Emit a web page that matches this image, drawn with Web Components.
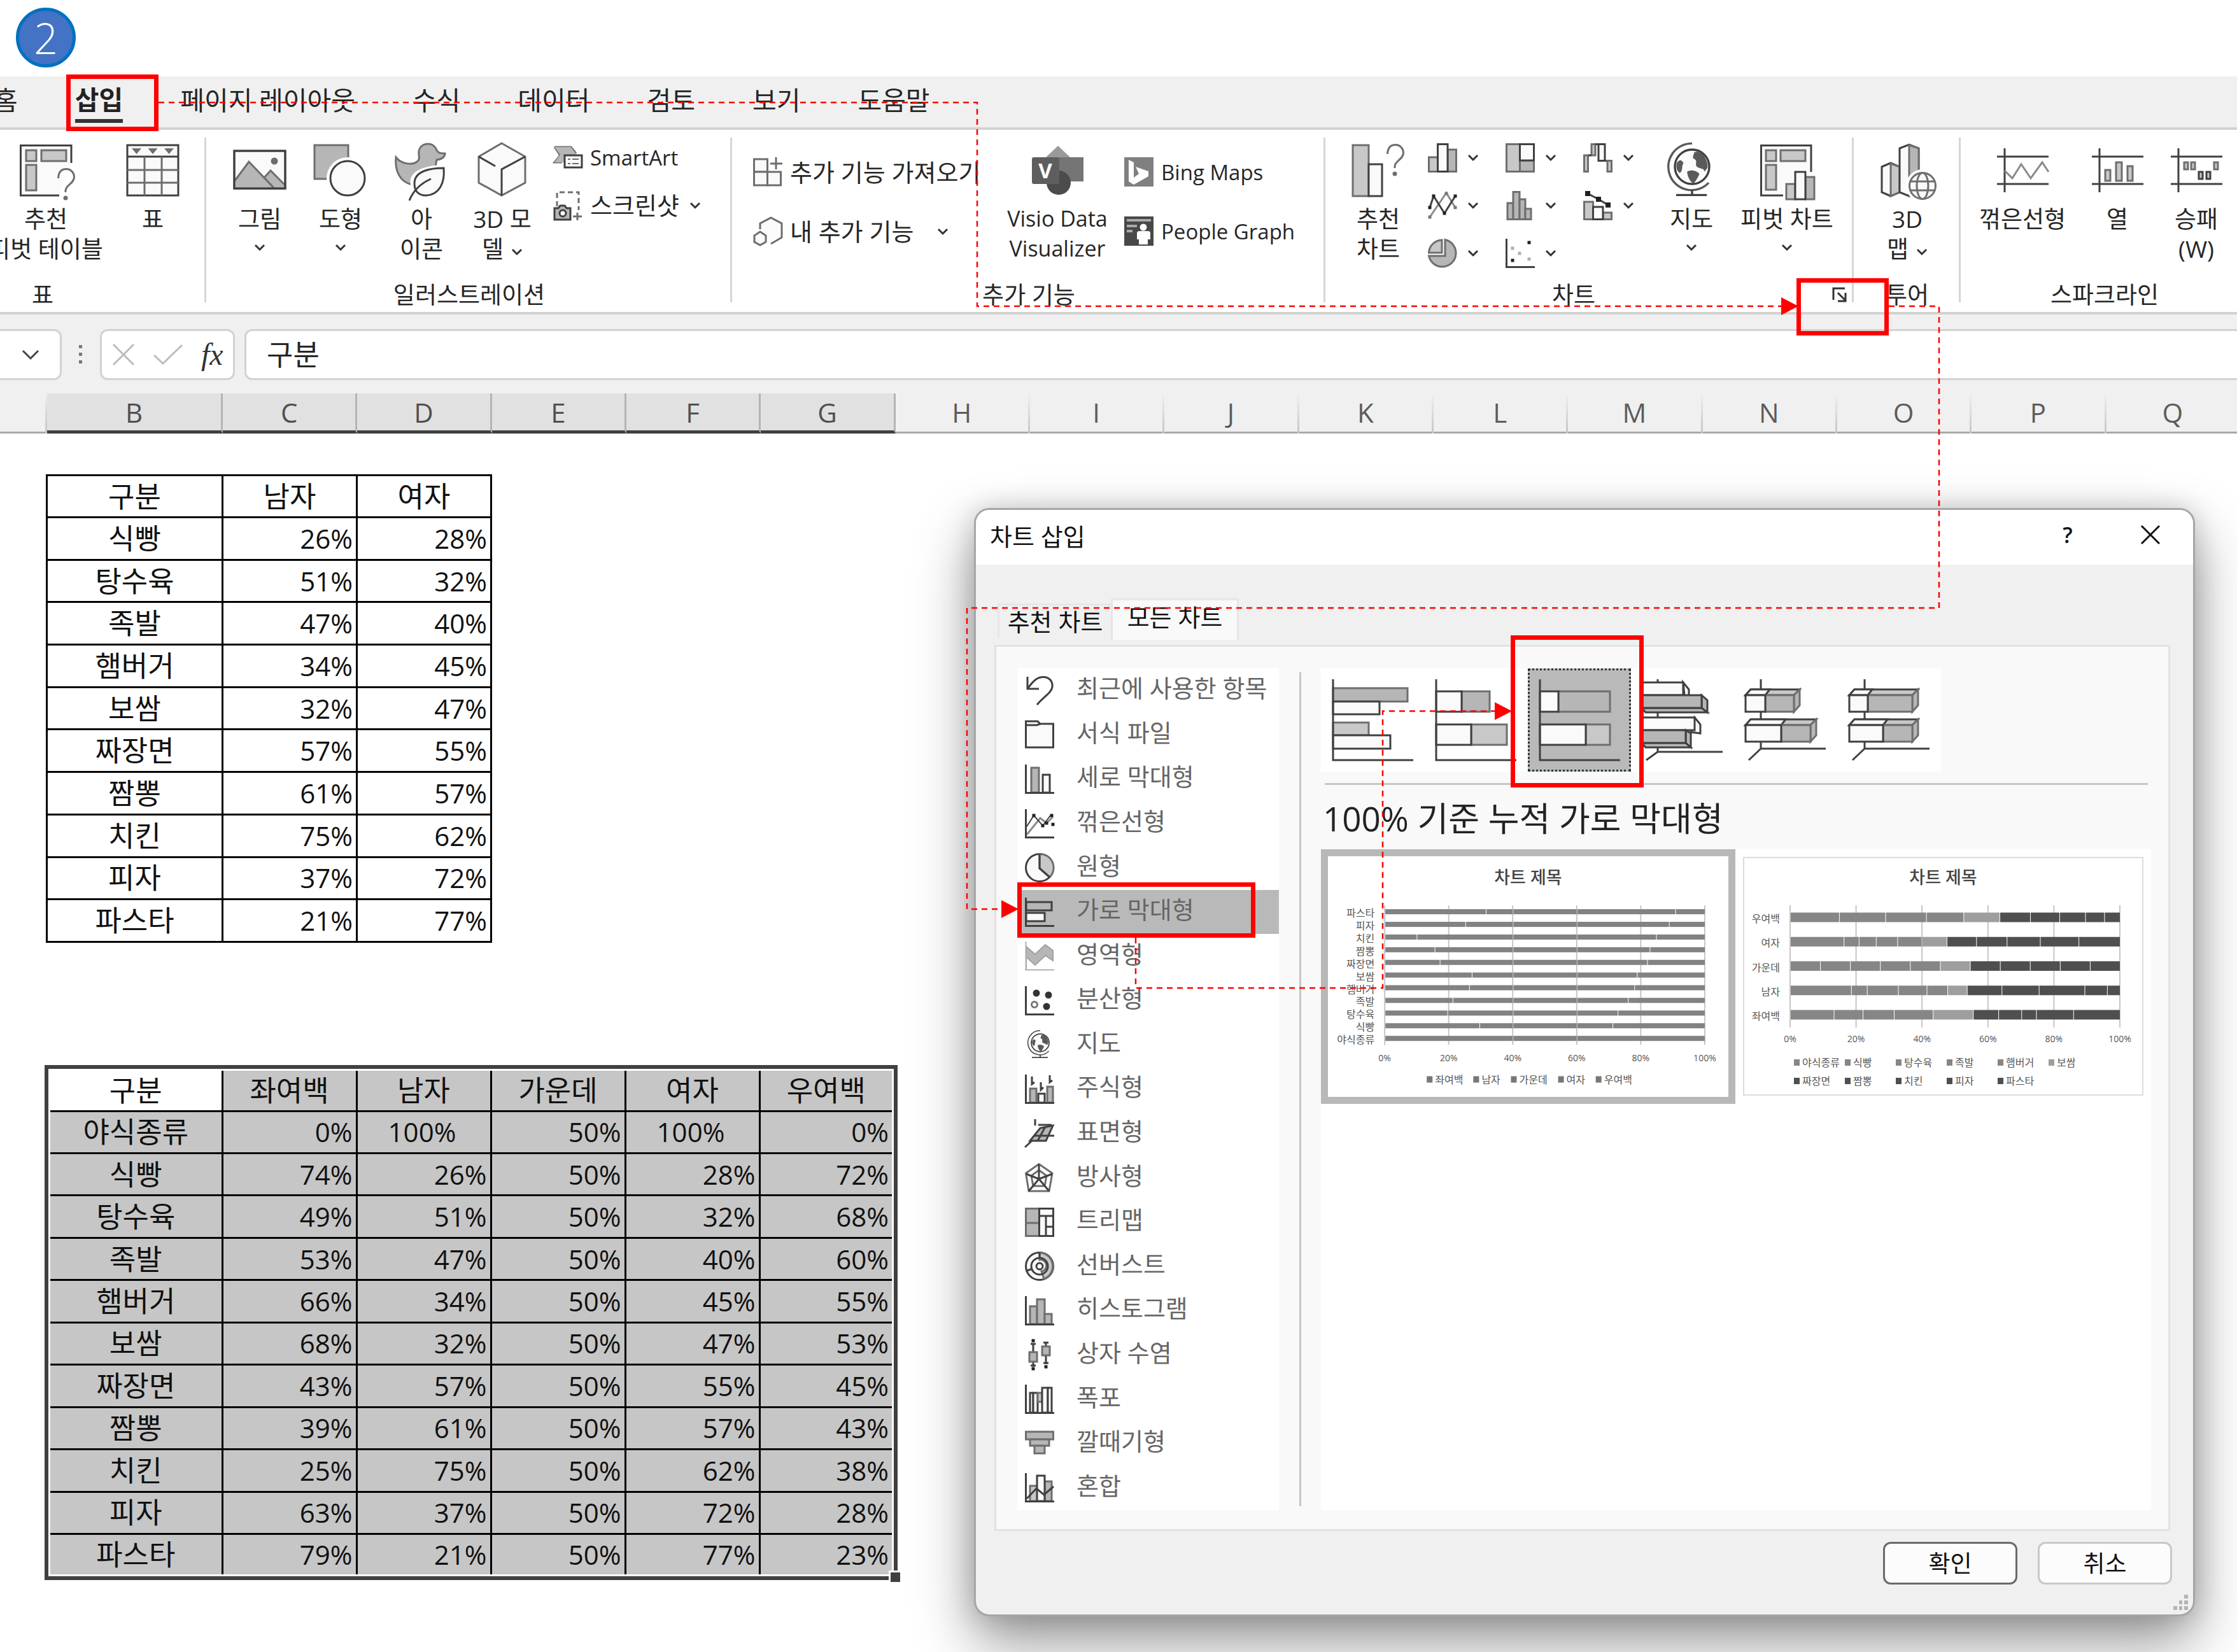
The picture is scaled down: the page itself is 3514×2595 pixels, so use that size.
<!DOCTYPE html>
<html lang="ko">
<head>
<meta charset="utf-8">
<title>차트 삽입</title>
<style>
  body {
    margin: 0;
    background: #fff;
    color: #262626;
    font-family: "Open Sans", "Noto Sans CJK KR", sans-serif;
    --line: #d2d2d2;
    --chrome: #f0f0f0;
  }
</style>
</head>
<body>
<insert-chart-guide></insert-chart-guide>

<script>
/* ---------- icon library ---------- */
const D = 'stroke="#404040" stroke-width="3" fill="none"';
const M = 'stroke="#6e6e6e" stroke-width="3" fill="none"';
const r = (x, y, w, h, fill, stroke = '#404040', sw = 3) =>
  `<rect x="${x}" y="${y}" width="${w}" height="${h}" fill="${fill}" stroke="${stroke}" stroke-width="${sw}"/>`;
const l = (d, stroke = '#404040', sw = 3, fill = 'none') =>
  `<path d="${d}" stroke="${stroke}" stroke-width="${sw}" fill="${fill}"/>`;
const G = '#b6b6b6', L = '#c8c8c8', W = '#fafafa', S = '#6e6e6e';

const globe = (cx, cy, rad) => `
  <g transform="translate(${cx} ${cy}) scale(${rad / 28})">
    <circle r="28" fill="${W}" stroke="#404040" stroke-width="3.5"/>
    <path d="M4-24C2-18-1-14 5-12C9-8 4-4 8 0C14 4 20 2 20 8L25 2C27-8 20-20 12-25Z M-25-6C-20-14-16-10-14-6C-18 0-14 6-20 10C-26 6-26 0-25-6Z M-8 8C-2 4 8 6 12 12C8 20 6 24 2 27C-4 24-8 14-8 8Z" fill="#5a5a5a"/>
    <path d="M0-38A38 38 0 1 0 27 26" fill="none" stroke="#5a5a5a" stroke-width="3.5"/>
    <path d="M0 38V45M-26 46H24" fill="none" stroke="#404040" stroke-width="3.5"/>
  </g>`;
const question = (x, y) => `<g transform="translate(${x} ${y})">
    <path d="M1.5 16C2 6 7 1.500 14 1.500C22 1.500 26.500 8 26.500 14C26.500 24 14 26 13 35V38" fill="none" stroke="#6e6e6e" stroke-width="3"/>
    <circle cx="13" cy="47" r="3.500" fill="#6e6e6e"/></g>`;
const axis46 = l('M1.5 0V44.5H46');
const frame = l('M17 9V78M5 22H86M5 65H86');
const box3d = (x0, xm, x1, y0, y1) =>
  l(`M${x0} ${y0}L${x0 + 8} ${y0 - 9}H${x1 + 9}L${x1} ${y0}Z`, '#404040', 3, L) +
  l(`M${x0} ${y0}L${x0 + 8} ${y0 - 9}H${xm + 7}L${xm} ${y0}Z`, '#404040', 3, W) +
  l(`M${x1} ${y0}L${x1 + 9} ${y0 - 9}V${y1 - 10}L${x1} ${y1}Z`, S, 3, G) +
  r(xm, y0, x1 - xm, y1 - y0, G, S) + r(x0, y0, xm - x0, y1 - y0, W);
const dots = (...p) => p.map(([x, y, c = '#202020']) => `<rect x="${x - 2.5}" y="${y - 2.5}" width="5" height="5" fill="${c}"/>`).join('');

const ICONS = {
  /* large ribbon icons */
  'pivot-suggest': [90, 92, l('M85 32V4.500H5.500V83H66', '#404040', 3, W) + r(14, 12, 16, 17, L, S) + r(38, 12, 39, 17, L, S) + r(14, 35, 16, 40, L, S) + question(63, 40)],
  'table': [90, 92, r(5, 4, 80, 79, W) + l('M5 22H85') + l('M5 43H85M5 63H85M32 22V83M59 22V83', S) + '<path d="M12 9H27L19.500 18ZM37.500 9H52.500L45 18ZM63 9H78L70.500 18Z" fill="#6e6e6e"/>'],
  'picture': [90, 92, r(5, 13, 80, 59, W) + l('M5 61L28 30L68 72H5Z', S, 3, G) + l('M52 55L62 44L85 67V72H68Z', S, 3, G) + r(5, 13, 80, 59, 'none') + '<circle cx="68" cy="29" r="5.500" fill="#6e6e6e"/>'],
  'shapes': [90, 92, r(4, 4, 53, 53, G, S) + '<circle cx="56" cy="56" r="33" fill="#fff"/><circle cx="56" cy="56" r="27" fill="#fafafa" stroke="#404040" stroke-width="3"/>'],
  'icons': [90, 92, l('M5 23C14 35 32 35 38 30C44 26 40 20 41 13C43 1 60-2 67 8C70 13 69 17 82 17C82 24 74 27 69 27C67 34 68 40 66 44L30 66C12 62 3 46 5 23Z', S, 3, G) + '<path d="M84 34C54 36 24 42 28 66L22 90L34 92C60 92 90 80 84 34Z" fill="#fff"/>' + l('M80 40C60 40 34 44 34 64C34 76 40 83 52 83C74 82 82 62 80 40Z', '#404040', 3, W) + l('M26 91C32 76 44 64 60 57')],
  'cube': [90, 92, l('M44 1L81 22V63L44 83L8 63V22Z', S, 3, W) + l('M81 22L44 42V83M8 22L34 37')],
  'visio': [90, 92, '<path d="M46 5L66 24L54 60H28V22Z" fill="#9a9a9a"/><rect x="47" y="23" width="39" height="38" fill="#757575"/><circle cx="47" cy="63" r="19" fill="#4c4c4c"/><rect x="5" y="23" width="43" height="42" rx="3" fill="#5e5e5e"/><text x="26" y="56" text-anchor="middle" font-size="33" font-weight="700" fill="#fff">V</text>'],
  'chart-suggest': [90, 92, r(5, 4, 25, 80, L, S) + r(30, 34, 21, 50, W) + question(58, 2)],
  'map': [90, 92, globe(46, 38, 27)],
  'pivot-chart': [90, 92, l('M83 46V4.500H4.500V83H39', '#404040', 3, W) + r(12, 12, 16, 17, L, S) + r(35, 12, 39, 17, L, S) + r(12, 35, 16, 39, L, S) + '<path d="M40 61H54V41H78V49H92V92H40Z" fill="#fff"/>' + r(44, 65, 14, 24, L, S) + r(74, 54, 14, 35, G, S) + r(58, 46, 16, 43, W)],
  'map3d': [90, 92, l('M5 38L19 32L33 38V78L19 84L5 78Z', '#404040', 3, W) + l('M19 33L33 38V78L19 84Z', S, 3, L) + l('M33 9L48 3L63 9V60H48V84L33 78Z', '#404040', 3, W) + l('M48 4L63 9V60H48Z', S, 3, G) + '<circle cx="69" cy="68" r="26" fill="#fff"/>' + `<g ${M}><circle cx="69" cy="68" r="20.500" fill="#fafafa"/><ellipse cx="69" cy="68" rx="9" ry="20.500"/><path d="M50 61H88M50 75H88"/></g>`],
  'spark-line': [90, 92, frame + l('M17 44L29 56L43 34L58 56L76 31L86 46', '#8a8a8a')],
  'spark-column': [90, 92, frame + r(26, 43, 8, 17, L, S) + r(43, 31, 9, 29, L, S) + r(61, 37, 8, 23, L, S)],
  'spark-winloss': [90, 92, frame + r(26, 31, 6, 11, L, S) + r(37, 31, 6, 11, L, S) + r(73, 31, 6, 11, L, S) + r(49, 46, 6, 11, L) + r(61, 46, 6, 11, L)],

  /* small ribbon icons */
  'smartart': [46, 46, l('M2 6H28L36 16M2 6L11 19L2 30H14', S, 3, G) + '<path d="M2 6H28L38 20H18V30H2L11 18Z" fill="#b6b6b6"/>' + r(18, 19, 27, 19, W) + l('M23 25H27M30 25H40M23 32H27M30 32H40', S, 2)],
  'screenshot': [46, 46, `<path d="M6 24V2H40V30" fill="none" stroke="#6e6e6e" stroke-width="3" stroke-dasharray="8 5"/>` + l('M2 27H8L11 23H18L21 27H27V45H2Z', '#404040', 3, G) + '<circle cx="15" cy="35" r="5" fill="#fafafa" stroke="#404040" stroke-width="3"/>' + l('M31 40H45M38 34V46', S)],
  'addin-store': [46, 46, r(1.5, 3, 21, 20, W, S) + r(1.5, 23, 21, 21, W, S) + r(22.5, 23, 21, 21, W, S) + l('M36 0V19M27 10H46', S)],
  'addin-mine': [46, 46, l('M11 20V11L28 2L45 11V33L28 43', S, 3, W) + l('M11 24L20 30V40L11 45L2 40V30Z', S, 3, W)],
  'bing': [46, 46, '<rect width="46" height="46" fill="#808080"/><path d="M7 4L15 8V32L23 26L18 15L38 22V30L15 43L7 38Z" fill="#fff"/>'],
  'people': [46, 46, '<rect width="46" height="46" fill="#484848"/><path d="M4 4H42V8H4ZM4 13H20V17H4ZM4 21H13V25H4Z" fill="#aaa"/><circle cx="30" cy="17" r="5.500" fill="#fff"/><path d="M20 26Q20 23 24 23H37Q41 23 41 26V36H37V44H23V36H20Z" fill="#fff"/>'],
  'col': [46, 46, r(1.5, 22, 14, 22.5, L, S) + r(31, 10, 13.5, 34.5, G, S) + r(15.500, 1.500, 15.500, 43, W)],
  'hier': [46, 46, r(1.5, 1.5, 21, 43, L, S) + r(22.5, 27, 22, 17.5, G, S) + r(22.5, 1.5, 22, 25.5, W)],
  'fall': [46, 46, r(1.5, 19, 6, 25.5, L, S) + r(13, 1.5, 6, 17.500, L, S) + l('M8 19H13M19 1.500H24') + r(24, 1.5, 10, 26, W) + l('M34 27.500H38') + r(38, 27.5, 6.500, 17, L, S)],
  'line': [46, 46, l('M3 41L29 3L43 26', '#8a8a8a') + l('M3 26L9 8L26 35L43 8') + dots([3, 26], [9, 8], [26, 35], [43, 8], [3, 41, '#777'], [29, 4, '#777'], [43, 26, '#777'])],
  'stat': [46, 46, r(3, 19, 9, 25.5, G, S) + r(12, 1.5, 10, 43, G, S) + r(22, 13, 9, 31.5, G, S) + r(31, 28, 9, 16.5, G, S)],
  'combo': [46, 46, r(1.5, 17, 14, 27.5, L, S) + r(31, 34, 13.5, 10.5, L, S) + r(15.5, 25, 15.5, 19.5, W) + l('M7 4L24 13L39 22') + '<path d="M3 0H11V8H3ZM20 9H28V17H20ZM35 18H43V26H35Z" fill="#202020"/>'],
  'pie': [46, 46, l('M22 2V22H1.500A21 21 0 0 1 22 2Z', S, 3, L) + l('M27 1.500A21.500 21.500 0 1 1 1.500 27H27Z', S, 3, G)],
  'scatter': [46, 46, l('M1.5 0V44.500H46') + dots([37, 6], [11, 34], [11, 15, '#b0b0b0'], [22, 23, '#b0b0b0'], [37, 32, '#b0b0b0'])],
  'launcher': [24, 24, l('M2 20V2H20M9 9L20 20M21 9V22H9', '#333', 3)],
  'chev': [18, 11, l('M2 2L9 9L16 2', '#333', 3)],
  'chev-big': [28, 17, l('M2 2L14 14L26 2', '#444', 3)],
  'cancel': [36, 36, l('M2 2L34 34M34 2L2 34', '#bcbcbc')],
  'check': [48, 36, l('M2 19L16 32L46 3', '#bcbcbc')],
  'dots': [6, 30, '<path d="M0 0H5V5H0ZM0 12H5V17H0ZM0 24H5V29H0Z" fill="#777"/>'],
  'close': [32, 32, l('M2 2L30 30M30 2L2 30', '#111')],
  'grip': [24, 24, '<path d="M17 0H23V6H17ZM9 9H14V15H9ZM17 9H23V15H17ZM0 18H6V24H0ZM9 18H14V24H9ZM17 18H23V24H17Z" fill="#b4b4b4"/>'],

  /* chart categories */
  't-recent': [46, 46, l('M4 1V20H22M4 20C14 6 20 1.500 29 1.500C38 1.500 44 8 43 17C42 26 30 32 19 45')],
  't-folder': [46, 46, l('M1.500 2H20L24 6H44.500V43H1.500Z', '#404040', 3, W) + l('M1.500 8H19L24 6')],
  't-column': [46, 46, r(10, 5, 12, 39, G, S) + r(28, 16, 11, 28, W) + axis46],
  't-line': [46, 46, l('M3 40L24 14L34 22L44 12', '#8a8a8a') + l('M3 27L14 10L28 26L40 10', '#404040', 2) + dots([14, 10], [28, 26], [34, 22], [42, 10], [44, 24]) + axis46],
  't-pie': [46, 46, '<circle cx="23" cy="23" r="21.500" fill="#fafafa" stroke="#404040" stroke-width="3"/>' + l('M23 1.500A21.500 21.500 0 0 1 39 38L23 24Z', S, 3, L) + l('M23 1.500V24L39 38')],
  't-bar': [46, 46, r(2, 7, 40, 13, G) + r(2, 24, 29, 13, W) + axis46],
  't-area': [46, 46, l('M2 44V8L16 20L32 5L44 14V30L32 22L16 37L2 24', '#a0a0a0', 2, G) + l('M1.500 0V44.500H46', '#b0b0b0', 2)],
  't-scatter': [46, 46, '<g fill="#333"><circle cx="18" cy="11" r="5.500"/><circle cx="37" cy="14" r="5.500"/><circle cx="34" cy="32" r="5.500"/></g><circle cx="15" cy="29" r="4.500" fill="none" stroke="#777" stroke-width="3"/>' + axis46],
  't-map': [46, 46, globe(24, 20, 14)],
  't-stock': [46, 46, r(8, 22, 10, 22, G, S) + r(21, 30, 10, 14, W) + r(35, 19, 9, 25, G, S) + l('M11 3V15L15 12M25 12V24L29 20M39 1V12L43 9') + axis46],
  't-surface': [46, 46, l('M8 34L24 14L44 10L33 34Z', '#404040', 3, G) + l('M14 26H37M21 9H42M20 34L32 12M16 0V10M33 26H46M0 44L10 35')],
  't-radar': [46, 46, l('M22 1.500L43 16L38 44H6L1.500 16Z', S) + l('M22 11L34 20L31 36H13L10 20Z', S) + l('M22 2V25L2 17M22 25L6 44M22 25L38 44M22 25L43 17')],
  't-tree': [46, 46, r(1.5, 1.5, 21, 43, G, S) + l('M1.500 24H22', S) + r(22.5, 1.5, 22, 43, W) + l('M22 13H45M33 13V45M33 30H45')],
  't-sun': [46, 46, '<circle cx="23" cy="23" r="21.500" fill="#fafafa" stroke="#404040" stroke-width="3"/>' + l('M23 1.500A21.500 21.500 0 0 1 30 43L26 31A9 9 0 0 0 23 13Z', S, 3, L) + `<g ${D}><circle cx="23" cy="23" r="13"/><circle cx="23" cy="23" r="5"/><path d="M23 1V10M3 30L12 27"/></g>`],
  't-hist': [46, 46, r(8, 16, 11, 28, G, S) + r(19, 5, 12, 39, G, S) + r(31, 28, 11, 16, G, S) + axis46],
  't-box': [46, 46, l('M13 6V42M9 6H17M9 40H17M33 4V38M29 4H37M29 36H37') + r(7, 19, 12, 15, G, S) + r(27, 10, 12, 14, G, S) + dots([13, 1], [13, 45], [33, 42])],
  't-fall': [46, 46, r(8, 13, 5, 31, W) + r(13, 13, 7, 31, W) + r(20, 13, 7, 14, L, S) + r(27, 5, 9, 39, W) + r(36, 5, 6, 39, W) + axis46],
  't-funnel': [46, 46, r(1.5, 4, 43, 12, G, S) + r(8, 16, 30, 10, G, S) + r(15, 26, 16, 12, G, S)],
  't-combo': [46, 46, r(8, 20, 12, 24, L, S) + r(31, 13, 11, 31, G, S) + r(19, 4, 12, 40, W) + l('M3 40L18 24L30 34L45 21') + axis46],

  /* bar chart subtypes */
  's-cluster': [162, 162, r(19, 31, 117, 21, G, S) + r(19, 52, 73, 20, W) + r(19, 85, 56, 20, L, S) + r(19, 105, 90, 21, W) + l('M19 17V144H145')],
  's-stack': [162, 162, r(59, 36, 44, 32, G, S) + r(19, 36, 40, 32, W) + r(74, 88, 56, 32, L, S) + r(19, 88, 55, 32, W) + l('M19 17V144H145')],
  's-full': [162, 162, r(48, 36, 81, 32, G, S) + r(19, 36, 29, 32, W) + r(91, 88, 38, 32, L, S) + r(19, 88, 72, 32, W) + l('M19 17V144H145')],
  's-cluster3d': [162, 162, l('M42 17V131H144M42 131L24 144') +
    l('M82 22L91 33V48L84 42Z', '#404040', 3, W) + r(17, 22, 65, 20, W) + l('M17 62L23 69H120L111 62Z M111 42L120 50V69L111 62Z', '#404040', 3, G) + r(17, 42, 94, 20, G) +
    l('M100 77L109 88V102L94 100Z', '#404040', 3, W) + r(17, 77, 83, 20, W) + l('M17 117L23 124H94L86 117Z M86 97L94 102V124L86 117Z', '#404040', 3, G) + r(17, 97, 69, 20, G)],
  's-stack3d': [162, 162, l('M42 17V126H144M42 126L23 144') + box3d(18, 49, 94, 42, 68) + box3d(18, 74, 120, 89, 115)],
  's-full3d': [162, 162, l('M42 17V126H144M42 126L23 144') + box3d(18, 47, 117, 42, 68) + box3d(18, 71, 117, 89, 115)]
};

/* ---------- base class ---------- */
class Base extends HTMLElement {
  connectedCallback() {
    if (this.shadowRoot) return;
    this.attachShadow({ mode: 'open' }).innerHTML =
      `<style>*{box-sizing:border-box}button,input{font:inherit;color:inherit;margin:0}button{background:none;border:0;padding:0;cursor:pointer}${this.css()}</style>${this.html()}`;
  }
  css() { return ':host{display:block}'; }
  html() { return '<slot></slot>'; }
}
const define = (name, cls) => customElements.define(name, cls);

define('ui-icon', class extends Base {
  css() { return ':host{display:block;flex:none;line-height:0}svg{display:block;overflow:visible}'; }
  html() {
    const [w, h, body] = ICONS[this.getAttribute('name')];
    return `<svg width="${w}" height="${h}" viewBox="0 0 ${w} ${h}" aria-hidden="true">${body}</svg>`;
  }
});

define('step-badge', class extends Base {
  css() { return `:host{display:grid;place-items:center;width:94px;height:94px;box-sizing:border-box;border:5px solid #0070c0;border-radius:50%;background:#4472c4;color:#fff;font-size:66px;line-height:84px;font-weight:300}`; }
});

/* ---------- ribbon ---------- */
define('tab-strip', class extends Base {
  css() { return `
    :host{display:block;background:var(--chrome);border-bottom:4px solid var(--line);overflow:hidden}
    nav{display:flex;gap:90px;height:80px;margin-left:-10px}
    button{position:relative;height:74px;font-size:41px;line-height:70px;white-space:nowrap}
    button[aria-selected=true]{font-weight:700;color:#222}
    button[aria-selected=true]::after{content:"";display:block;height:6px;margin-top:-4px;background:#333}`; }
  html() {
    return `<nav role="tablist">${['홈', '삽입', '페이지 레이아웃', '수식', '데이터', '검토', '보기', '도움말']
      .map(t => `<button role="tab" aria-selected="${t === '삽입'}">${t}</button>`).join('')}</nav>`;
  }
});

define('ribbon-button', class extends Base {
  css() { return `
    :host{display:block;flex:none;padding-top:14px;width:var(--w,110px)}
    :host([latin]) button{font-size:34px}
    button{display:flex;flex-direction:column;align-items:center;width:100%;font-size:37px;line-height:47px;white-space:nowrap;text-align:center}
    .label{margin-top:4px}
    .drop{display:block;margin-top:16px}`; }
  html() {
    return `<button><ui-icon name="${this.getAttribute('icon')}"></ui-icon><span class="label"><slot></slot></span>${this.hasAttribute('drop') ? '<ui-icon class="drop" name="chev"></ui-icon>' : ''}</button>`;
  }
});

define('ribbon-mini', class extends Base {
  css() { return `
    :host{display:block}
    button{display:flex;align-items:center;gap:12px;height:var(--row,75px);font-size:38px;line-height:47px;white-space:nowrap}
    :host([latin]) button{font-size:33px}
    .drop{margin-left:4px}`; }
  html() {
    return `<button aria-label="${this.getAttribute('label') || this.textContent}"><ui-icon name="${this.getAttribute('icon')}"></ui-icon><slot></slot>${this.hasAttribute('drop') ? '<ui-icon class="drop" name="chev"></ui-icon>' : ''}</button>`;
  }
});

define('ribbon-group', class extends Base {
  css() { return `
    :host{display:flex;flex-direction:column;flex:none;position:relative;height:286px;box-sizing:border-box}
    :host(:not([last]))::after{content:"";position:absolute;right:0;top:12px;bottom:15px;width:3px;background:#d6d6d6}
    .body{display:flex;flex:1;padding-top:6px}
    .foot{display:flex;align-items:center;height:56px;font-size:37px;line-height:47px}
    .foot span{flex:1;text-align:center}
    button{display:flex;justify-content:flex-end;align-items:center;width:40px;height:47px;margin-right:10px}`; }
  html() {
    return `<div class="body"><slot></slot></div><div class="foot"><span>${this.getAttribute('label')}</span>${this.hasAttribute('launcher') ? '<button aria-label="모든 차트 보기"><ui-icon name="launcher"></ui-icon></button>' : ''}</div>`;
  }
});

define('ribbon-bar', class extends Base {
  css() { return `
    :host{display:flex;background:#fff;border-bottom:4px solid var(--line);overflow:hidden;height:290px;box-sizing:border-box}
    .col{display:flex;flex-direction:column}
    .mid{justify-content:center;--row:93px;padding-bottom:11px}
    .inner{display:flex;width:100%}
    .charts{display:grid;grid-template-columns:repeat(3,122px);grid-auto-rows:75px;margin:0 0 auto 28px}
    .chev{display:inline-block;vertical-align:middle;margin-left:12px}
    .chev.far{margin-left:24px}
    .tables{width:514px;margin-left:-190px}
    .tables .inner{justify-content:flex-end;gap:28px;padding-right:34px}
    .illus{width:826px}
    .illus .inner{gap:17px;padding-left:29px}
    .illus .col{padding-left:8px}
    .addins{width:932px}
    .addins .inner{padding-left:33px}
    .addins .mid:first-child{width:398px}
    .addins .mid:last-child{margin-left:25px}
    .chartg{width:830px}
    .chartg .inner{padding-left:33px}
    .tour{width:168px}
    .tour .inner{justify-content:center}
    .spark{width:452px}
    .spark .inner{gap:34px;padding-left:27px}`; }
  html() {
    const minis = [['col', '세로 막대형'], ['hier', '계층 구조'], ['fall', '폭포'], ['line', '꺾은선형'], ['stat', '통계'], ['combo', '혼합'], ['pie', '원형'], ['scatter', '분산형']];
    return `
    <ribbon-group class="tables" label="표"><div class="inner">
      <ribbon-button icon="pivot-suggest" style="--w:180px">추천<br>피벗 테이블</ribbon-button>
      <ribbon-button icon="table" style="--w:100px">표</ribbon-button></div></ribbon-group>
    <ribbon-group class="illus" label="일러스트레이션"><div class="inner">
      <ribbon-button icon="picture" drop>그림</ribbon-button>
      <ribbon-button icon="shapes" drop>도형</ribbon-button>
      <ribbon-button icon="icons">아<br>이콘</ribbon-button>
      <ribbon-button icon="cube">3D 모<br>델<ui-icon class="chev" name="chev"></ui-icon></ribbon-button>
      <div class="col"><ribbon-mini icon="smartart" latin>SmartArt</ribbon-mini><ribbon-mini icon="screenshot" drop>스크린샷</ribbon-mini></div></div></ribbon-group>
    <ribbon-group class="addins" label="추가 기능"><div class="inner">
      <div class="col mid"><ribbon-mini icon="addin-store">추가 기능 가져오기</ribbon-mini><ribbon-mini icon="addin-mine">내 추가 기능<ui-icon class="chev far" name="chev"></ui-icon></ribbon-mini></div>
      <ribbon-button icon="visio" style="--w:160px" latin>Visio Data<br>Visualizer</ribbon-button>
      <div class="col mid"><ribbon-mini icon="bing" latin>Bing Maps</ribbon-mini><ribbon-mini icon="people" latin>People Graph</ribbon-mini></div></div></ribbon-group>
    <ribbon-group class="chartg" label="차트" launcher><div class="inner">
      <ribbon-button icon="chart-suggest" style="--w:100px">추천<br>차트</ribbon-button>
      <div class="charts">${minis.map(([i, n]) => `<ribbon-mini icon="${i}" label="${n}" drop></ribbon-mini>`).join('')}</div>
      <ribbon-button icon="map" style="--w:96px" drop>지도</ribbon-button>
      <ribbon-button icon="pivot-chart" style="--w:204px" drop>피벗 차트</ribbon-button></div></ribbon-group>
    <ribbon-group class="tour" label="투어"><div class="inner">
      <ribbon-button icon="map3d">3D<br>맵<ui-icon class="chev" name="chev"></ui-icon></ribbon-button></div></ribbon-group>
    <ribbon-group class="spark" label="스파크라인" last><div class="inner">
      <ribbon-button icon="spark-line" style="--w:140px">꺾은선형</ribbon-button>
      <ribbon-button icon="spark-column" style="--w:90px">열</ribbon-button>
      <ribbon-button icon="spark-winloss" style="--w:90px">승패<br>(W)</ribbon-button></div></ribbon-group>`;
  }
});

define('formula-bar', class extends Base {
  css() { return `
    :host{display:flex;align-items:center;background:var(--chrome);padding:23px 0 21px;overflow:hidden}
    .box{height:80px;border:3px solid var(--line);border-radius:12px;background:#fff;display:flex;align-items:center}
    .name{width:109px;margin-left:-12px;justify-content:flex-end;padding-right:32px}
    .sep{margin:0 27px}
    .tools{width:212px;gap:28px;padding-left:16px}
    .fx{font:italic 48px/60px "Liberation Serif",serif;color:#333}
    input{flex:1;height:80px;margin:0 -12px 0 15px;padding:0 0 6px 32px;border:3px solid var(--line);border-radius:12px;background:#fff;font-size:45px;outline:0;min-width:0}`; }
  html() {
    return `<button class="box name" aria-label="이름 상자"><ui-icon name="chev-big"></ui-icon></button><ui-icon class="sep" name="dots"></ui-icon>
      <div class="box tools"><button aria-label="취소"><ui-icon name="cancel"></ui-icon></button><button aria-label="입력"><ui-icon name="check"></ui-icon></button><button class="fx">fx</button></div>
      <input aria-label="수식 입력줄" value="구분">`;
  }
});

/* ---------- worksheet ---------- */
define('column-heads', class extends Base {
  css() { return `
    :host{display:block;background:var(--chrome);overflow:hidden}
    .row{display:flex;height:63px;margin-right:-6px}
    span{flex:1 1 0;text-align:center;font-size:42px;line-height:60px;color:#5c5c5c;border-right:3px solid;border-image:linear-gradient(#f0f0f0,#c4c4c4) 1;border-image-width:0 3px 0 0;box-shadow:inset 0 -3px #a8a8a8}
    .corner{flex:0 0 74px}
    .b{flex:0 0 276px}
    .on{background:#e1e1e1;border-image:none;border-right:3px solid #b4b4b4;border-bottom:5px solid #404040;box-shadow:none;color:#505050}`; }
  html() {
    return `<div class="row"><span class="corner"></span>${[...'BCDEFGHIJKLMNOPQ'].map((c, i) => `<span class="${i < 6 ? 'on' : ''} ${i ? '' : 'b'}">${c}</span>`).join('')}</div>`;
  }
});

const FOODS = ['식빵', '탕수육', '족발', '햄버거', '보쌈', '짜장면', '짬뽕', '치킨', '피자', '파스타'];
const MEN = [26, 51, 47, 34, 32, 57, 61, 75, 37, 21];
const WOMEN = [28, 32, 40, 45, 47, 55, 57, 62, 72, 77];
const ROWS = [['야식종류', 0, 100, 50, 100, 0], ...FOODS.map((f, i) => [f, 100 - MEN[i], MEN[i], 50, WOMEN[i], 100 - WOMEN[i]])];
const SERIES = ['좌여백', '남자', '가운데', '여자', '우여백'];

define('data-table', class extends Base {
  get wide() { return this.hasAttribute('selected'); }
  css() { return `
    :host{display:block;width:701px}
    :host([selected]){position:relative;width:1340px;border:6px solid #404040;padding:3px;box-sizing:border-box}
    table{border-collapse:collapse;table-layout:fixed;width:100%;height:736px;color:#111}
    tr{height:66px}
    th,td{border:3px solid #000;padding:0;font-weight:400;font-size:45px;line-height:54px;white-space:nowrap}
    td{font-size:42px;text-align:right;padding-right:5px}
    td.mid{text-align:center}
    col.first{width:276px}
    :host([selected]) table{height:791px;border-style:hidden;background:#c6c6c6}
    :host([selected]) tbody tr:last-child,:host([selected]) thead tr{height:63px}
    :host([selected]) th.active{background:#fff}
    :host([selected]) col.first{width:270px}
    col.c{width:211px}
    .handle{position:absolute;right:-10px;bottom:-9px;width:18px;height:18px;background:#404040;border:3px solid #fff;border-width:3px 0 0 3px}`; }
  html() {
    const heads = this.wide ? SERIES : ['남자', '여자'];
    const rows = this.wide ? ROWS : FOODS.map((f, i) => [f, MEN[i], WOMEN[i]]);
    return `<table><colgroup><col class="first">${heads.map((_, i) => `<col class="${i < heads.length - 1 ? 'c' : ''}">`).join('')}</colgroup>
      <thead><tr><th class="active">구분</th>${heads.map(h => `<th>${h}</th>`).join('')}</tr></thead>
      <tbody>${rows.map(([n, ...v]) => `<tr><th>${n}</th>${v.map(x => `<td class="${x === 100 ? 'mid' : ''}">${x}%</td>`).join('')}</tr>`).join('')}</tbody></table>
      ${this.wide ? '<i class="handle"></i>' : ''}`;
  }
});

/* ---------- chart preview ---------- */
define('stacked-chart', class extends Base {
  css() { return `:host{display:block;background:#fff}svg{display:block;width:100%;height:auto}text{fill:#555}.t{font-size:27px;fill:#444;font-weight:500}.s{font-size:16px}.a{font-size:14px}`; }
  html() {
    const flip = this.hasAttribute('by-food');
    const c = flip
      ? { w: 625, h: 371, x0: 72, x1: 590, y0: 74, y1: 266, first: 93, step: 38.25, bar: 15, ax: 289, title: 40, lx: 56 }
      : { w: 628, h: 377, x0: 89, x1: 591, y0: 77, y1: 296, first: 87, step: 19.87, bar: 8, ax: 321, title: 43, lx: 73 };
    const data = flip
      ? SERIES.map((s, i) => [s, ...ROWS.map(x => x[i + 1])]).reverse()
      : [...ROWS].reverse();
    const shade = i => !flip ? '#828282' : i < 5 ? '#868686' : i === 5 ? '#9e9e9e' : '#4f4f4f';
    const X = p => c.x0 + (c.x1 - c.x0) * p;
    let s = `<text class="t" x="${c.w / 2}" y="${c.title}" text-anchor="middle">차트 제목</text>`;
    for (let k = 0; k <= 5; k++) {
      s += `<path d="M${X(k / 5)} ${c.y0}V${c.y1}" stroke="#c6c6c6" stroke-width="2"/><text class="a" x="${X(k / 5)}" y="${c.ax}" text-anchor="middle">${k * 20}%</text>`;
    }
    data.forEach(([name, ...v], i) => {
      const y = c.first + c.step * i, sum = v.reduce((a, b) => a + b, 0);
      let run = 0;
      s += `<text class="s" x="${c.lx}" y="${y + 8}" text-anchor="end">${name}</text>`;
      v.forEach((n, j) => {
        if (!n) return;
        const a = X(run / sum), b = X((run + n) / sum);
        s += `<rect x="${a + 1}" y="${y - c.bar / 2}" width="${b - a - 1}" height="${c.bar}" fill="${shade(j)}"/>`;
        run += n;
      });
    });
    const key = (x, y, n, f) => `<rect x="${x}" y="${y - 5}" width="9" height="10" fill="${f}"/><text class="s" x="${x + 13}" y="${y + 6}">${n}</text>`;
    if (flip) ROWS.forEach(([n], i) => { s += key(78 + 80 * (i % 6), i < 6 ? 321 : 350, n, shade(i)); });
    else SERIES.forEach((n, i) => { s += key([155, 228, 287, 361, 420][i], 350, n, '#777'); });
    return `<svg viewBox="0 0 ${c.w} ${c.h}" role="img" aria-label="차트 미리 보기">${s}</svg>`;
  }
});

/* ---------- dialog ---------- */
define('type-list', class extends Base {
  css() { return `
    :host{display:grid;grid-auto-rows:1fr;background:#fff;width:411px}
    button{display:flex;align-items:center;gap:35px;padding-left:12px;font-size:38px;line-height:48px;color:#666;white-space:nowrap;min-height:0}
    button[aria-selected=true]{background:#b9b9b9}
    span{margin-top:-9px}`; }
  html() {
    return [['recent', '최근에 사용한 항목'], ['folder', '서식 파일'], ['column', '세로 막대형'], ['line', '꺾은선형'], ['pie', '원형'], ['bar', '가로 막대형'], ['area', '영역형'], ['scatter', '분산형'], ['map', '지도'], ['stock', '주식형'], ['surface', '표면형'], ['radar', '방사형'], ['tree', '트리맵'], ['sun', '선버스트'], ['hist', '히스토그램'], ['box', '상자 수염'], ['fall', '폭포'], ['funnel', '깔때기형'], ['combo', '혼합']]
      .map(([i, n]) => `<button role="option" aria-selected="${i === 'bar'}"><ui-icon name="t-${i}"></ui-icon><span>${n}</span></button>`).join('');
  }
});

define('subtype-picker', class extends Base {
  css() { return `
    :host{display:flex;background:#fff;width:974px;height:162px}
    button{flex:1 1 0;height:162px}
    button[aria-pressed=true]{background:#b9b9b9;outline:3px dotted #333;outline-offset:-3px}`; }
  html() {
    return [['cluster', '묶은 가로 막대형'], ['stack', '누적 가로 막대형'], ['full', '100% 기준 누적 가로 막대형'], ['cluster3d', '3차원 묶은 가로 막대형'], ['stack3d', '3차원 누적 가로 막대형'], ['full3d', '3차원 100% 기준 누적 가로 막대형']]
      .map(([i, n]) => `<button aria-label="${n}" aria-pressed="${i === 'full'}"><ui-icon name="s-${i}"></ui-icon></button>`).join('');
  }
});

define('chart-dialog', class extends Base {
  css() { return `
    :host{display:flex;flex-direction:column;box-sizing:border-box;width:1918px;height:1741px;background:var(--chrome);border:3px solid #a6a6a6;border-radius:24px;overflow:hidden;color:#111;box-shadow:0 40px 90px rgba(0,0,0,.42),0 0 40px rgba(0,0,0,.16)}
    header{display:flex;align-items:center;height:86px;background:#fff;padding:0 42px 8px 22px;font-size:38px}
    header h1{flex:1;font:inherit;margin:0}
    header button{display:grid;place-items:center;width:50px;height:50px}
    header .help{margin-right:80px;font-weight:600;font-size:34px}
    .tabs{display:flex;align-items:flex-start;padding:53px 0 0 34px;height:126px}
    .tabs button{font-size:38px;border:3px solid #e6e6e6;border-bottom:0;white-space:nowrap}
    .tabs .a{width:178px;height:53px;line-height:48px;margin-top:8px;border-right:0}
    .tabs .b{width:201px;height:65px;line-height:52px;background:#f9f9f9;padding-bottom:10px}
    .panel{display:flex;flex:1;min-height:0;margin:0 36px 0 29px;border:3px solid #e2e2e2;background:#f9f9f9;padding:34px 27px 30px 33px}
    .rule{width:3px;margin:6px 31px 6px 32px;background:#c6c6c6}
    .right{flex:1;display:flex;flex-direction:column;min-width:0}
    hr{width:calc(100% - 11px);height:3px;margin:18px 0 0 6px;border:0;background:#c6c6c6;flex:none}
    h2{margin:17px 0 0 3px;font-size:53px;line-height:72px;font-weight:400;height:84px;color:#222;white-space:nowrap}
    .previews{flex:1;display:flex;align-items:flex-start;background:#fff}
    .previews button{display:block;flex:none}
    .sel{width:651px;border:11px solid #b8b8b8}
    .plain{width:629px;margin:12px 0 0 12px;border:2px solid #dcdcdc}
    footer{display:flex;justify-content:flex-end;gap:32px;height:131px;padding:17px 33px 0}
    footer button{width:211px;height:67px;border:3px solid #c8c8c8;border-radius:12px;background:#fcfcfc;font-size:37px;line-height:56px}
    footer .ok{border-color:#6a6a6a}
    .grip{position:absolute;right:7px;bottom:7px}`; }
  html() {
    return `<header><h1>차트 삽입</h1><button class="help">?</button><button aria-label="닫기"><ui-icon name="close"></ui-icon></button></header>
      <div class="tabs" role="tablist"><button class="a" role="tab">추천 차트</button><button class="b" role="tab" aria-selected="true">모든 차트</button></div>
      <section class="panel"><type-list role="listbox"></type-list><div class="rule"></div>
        <div class="right"><subtype-picker></subtype-picker><hr><h2>100% 기준 누적 가로 막대형</h2>
          <div class="previews"><button class="sel"><stacked-chart></stacked-chart></button><button class="plain"><stacked-chart by-food></stacked-chart></button></div></div></section>
      <footer><button class="ok">확인</button><button>취소</button></footer><ui-icon class="grip" name="grip"></ui-icon>`;
  }
});

/* ---------- red walkthrough marks ---------- */
define('callout-layer', class extends Base {
  css() { return `:host{position:absolute;left:0;top:0;pointer-events:none}svg{display:block;overflow:visible}`; }
  html() {
    return `<svg width="3200" height="1600" viewBox="0 0 3200 1600" fill="none" stroke="#f00" aria-hidden="true">
      <g stroke-width="2.500" stroke-dasharray="9 7">
        <path d="M249 161H1535V481H2798"/><path d="M2967 481H3046V955H1519V1428H1573"/><path d="M1784 1473V1552H2172V1117H2348"/></g>
      <g stroke-width="7"><rect x="107.500" y="120.500" width="138" height="82"/><rect x="2825.500" y="440.500" width="138" height="83"/><rect x="1601.500" y="1389.500" width="367" height="80"/><rect x="2376.500" y="1001.500" width="202" height="232"/></g>
      <g stroke="none" fill="#f00"><path d="M2798 467L2825 481L2798 495Z"/><path d="M1573 1414L1600 1428L1573 1442Z"/><path d="M2348 1103L2375 1117L2348 1131Z"/></g></svg>`;
  }
});

define('insert-chart-guide', class extends Base {
  css() { return `
    :host{display:block;position:relative;min-height:100vh;overflow:hidden;background:#fff}
    .top{height:120px;padding:12px 0 0 25px}
    .sheet{padding:64px 0 0 70px}
    .small{margin:0 0 192px 2px}
    chart-dialog{position:absolute;left:1530px;top:798px}`; }
  html() {
    return `<div class="top"><step-badge>2</step-badge></div>
      <tab-strip></tab-strip><ribbon-bar></ribbon-bar><formula-bar></formula-bar><column-heads></column-heads>
      <main class="sheet"><data-table class="small"></data-table><data-table selected></data-table></main>
      <chart-dialog role="dialog" aria-label="차트 삽입"></chart-dialog><callout-layer></callout-layer>`;
  }
});
</script>
</body>
</html>
